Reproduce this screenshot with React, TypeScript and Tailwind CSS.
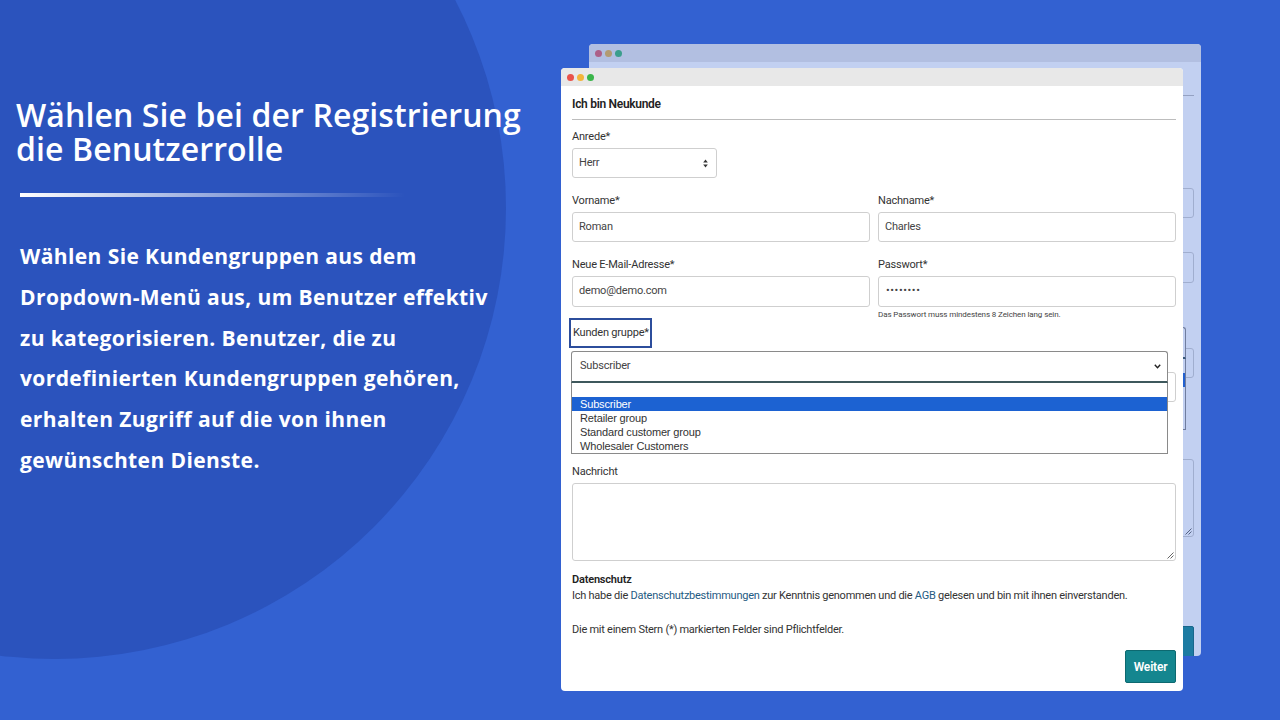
import React from "react";

const formFont = "font-['Roboto','Liberation_Sans',sans-serif]";

function Dots({ faded }: { faded?: boolean }) {
  return (
    <div className="flex h-[18px] items-center gap-[3px] pl-[6px]">
      <span className={`h-[7px] w-[7px] rounded-full ${faded ? "bg-[#e0606a]" : "bg-[#e9524a]"}`} />
      <span className={`h-[7px] w-[7px] rounded-full ${faded ? "bg-[#e8b44a]" : "bg-[#f2b53b]"}`} />
      <span className={`h-[7px] w-[7px] rounded-full ${faded ? "bg-[#3fb870]" : "bg-[#3ab54a]"}`} />
    </div>
  );
}

function Label({ children, ghost }: { children: React.ReactNode; ghost?: boolean }) {
  return (
    <div className="h-[14px] text-[11px] leading-[14px] tracking-[-0.2px] text-[#333]">{ghost ? null : children}</div>
  );
}

function Field({ children, className = "" }: { children?: React.ReactNode; className?: string }) {
  return (
    <div
      className={`flex h-[30px] items-center rounded-[3px] border border-[#cfcfcf] bg-white pl-[6px] text-[11px] tracking-[-0.2px] text-[#444] ${className}`}
    >
      {children}
    </div>
  );
}

function Form({ ghost }: { ghost?: boolean }) {
  const t = (s: React.ReactNode) => (ghost ? null : s);
  return (
    <div className={`flex flex-col pl-[11px] pr-[7px] ${formFont}`}>
      <div className="mt-[10px] h-[16px] text-[12px] font-semibold leading-[16px] tracking-[-0.3px] text-[#222]">
        {t("Ich bin Neukunde")}
      </div>
      <div className="mt-[7px] h-px bg-[#bdbdbd]" />

      <div className="mt-[10px]">
        <Label ghost={ghost}>Anrede*</Label>
      </div>
      <Field className="mt-[4px] w-[145px] justify-between pr-[8px]">
        <span>{t("Herr")}</span>
        {!ghost && (
          <svg width="5" height="9" viewBox="0 0 5 9">
            <path d="M2.5 0.5 L4.8 3.5 H0.2 Z" fill="#333" />
            <path d="M2.5 8.5 L4.8 5.5 H0.2 Z" fill="#333" />
          </svg>
        )}
      </Field>

      <div className="mt-[16px] grid grid-cols-2 gap-x-[8px]">
        <div className="flex flex-col">
          <Label ghost={ghost}>Vorname*</Label>
          <Field className="mt-[4px]">{t("Roman")}</Field>
        </div>
        <div className="flex flex-col">
          <Label ghost={ghost}>Nachname*</Label>
          <Field className="mt-[4px]">{t("Charles")}</Field>
        </div>
      </div>

      <div className="mt-[16px] grid grid-cols-2 gap-x-[8px]">
        <div className="flex flex-col">
          <Label ghost={ghost}>Neue E-Mail-Adresse*</Label>
          <Field className="mt-[4px] h-[31px]">{t("demo@demo.com")}</Field>
        </div>
        <div className="flex flex-col">
          <Label ghost={ghost}>Passwort*</Label>
          <Field className="mt-[4px] h-[31px] pl-[7px] text-[11px] tracking-[0.6px]">{t("••••••••")}</Field>
          <div className="mt-[3px] h-[10px] text-[8px] leading-[10px] tracking-[-0.1px] text-[#444]">
            {t("Das Passwort muss mindestens 8 Zeichen lang sein.")}
          </div>
        </div>
      </div>

      <div className="relative -mt-[2px] flex flex-col">
        <div
          className={`-ml-[3px] flex h-[30px] w-[83px] items-center border-2 pl-[2px] text-[11px] tracking-[-0.2px] text-[#333] ${
            ghost ? "border-transparent" : "border-[#2c4d9c]"
          }`}
        >
          {t("Kunden gruppe*")}
        </div>
        <Field className="mt-[24px]" />

        <div className="absolute left-[-1px] right-[8px] top-[33px] z-10 font-['Liberation_Sans',Arial,sans-serif]">
          <div className="flex h-[32px] items-center justify-between rounded-t-[3px] border border-b-2 border-[#8a8a8a] border-b-[#3e585c] bg-white pl-[8px] pr-[6px] font-['Roboto',sans-serif] text-[11px] tracking-[-0.2px] text-[#444]">
            <span>{t("Subscriber")}</span>
            {!ghost && (
              <svg width="7" height="5" viewBox="0 0 7 5">
                <path d="M0.8 0.8 L3.5 3.8 L6.2 0.8" fill="none" stroke="#222" strokeWidth="1.4" />
              </svg>
            )}
          </div>
          <div className="flex flex-col border-x border-b border-[#8a8a8a] bg-white text-[11px] leading-[14px] tracking-[-0.15px] text-[#333]">
            <div className="h-[14px]" />
            <div className="h-[14px] bg-[#1c62d2] pl-[8px] text-white">{t("Subscriber")}</div>
            <div className="h-[14px] pl-[8px]">{t("Retailer group")}</div>
            <div className="h-[14px] pl-[8px]">{t("Standard customer group")}</div>
            <div className="h-[14px] pl-[8px]">{t("Wholesaler Customers")}</div>
          </div>
        </div>
      </div>

      <div className="mt-[63px]">
        <Label ghost={ghost}>Nachricht</Label>
      </div>
      <div className="relative mt-[4px] h-[78px] rounded-[3px] border border-[#cfcfcf] bg-white">
        <svg className="absolute bottom-[1px] right-[1px]" width="8" height="8" viewBox="0 0 8 8">
          <path d="M7.5 1.5 L1.5 7.5 M7.5 4.5 L4.5 7.5" stroke="#666" strokeWidth="1" />
        </svg>
      </div>

      <div className="mt-[12px] h-[14px] text-[11px] font-semibold leading-[14px] tracking-[-0.2px] text-[#222]">
        {t("Datenschutz")}
      </div>
      <div className="mt-[2px] h-[14px] text-[11px] leading-[14px] tracking-[-0.25px] text-[#333]">
        {!ghost && (
          <>
            Ich habe die <span className="text-[#1f5b83]">Datenschutzbestimmungen</span> zur Kenntnis genommen und die{" "}
            <span className="text-[#1f5b83]">AGB</span> gelesen und bin mit ihnen einverstanden.
          </>
        )}
      </div>
      <div className="mt-[20px] h-[14px] text-[11px] leading-[14px] tracking-[-0.25px] text-[#333]">
        {t("Die mit einem Stern (*) markierten Felder sind Pflichtfelder.")}
      </div>
      <div className="mt-[13px] flex justify-end">
        <div className="flex h-[33px] w-[51px] items-center justify-center rounded-[2px] border border-[#0d6970] bg-[#14868f] text-[12px] font-semibold tracking-[-0.2px] text-white">
          {t("Weiter")}
        </div>
      </div>
    </div>
  );
}

function Window({ faded }: { faded?: boolean }) {
  return (
    <div className="h-full w-full overflow-hidden rounded-[4px] bg-white">
      <div className="h-[18px] bg-[#e8e8e8]">
        <Dots faded={faded} />
      </div>
      <Form ghost={faded} />
    </div>
  );
}

export default function App() {
  return (
    <div className="relative h-[720px] w-[1280px] overflow-hidden bg-[#3361d1]">
      <div className="pointer-events-none absolute left-[-396px] top-[-243px] h-[902px] w-[902px] rounded-full bg-[#2b53bd]" />

      <div className="relative flex">
        <div className="w-[561px] shrink-0 pl-[16px] pt-[98px] font-['Open_Sans',sans-serif] text-white">
          <h1 className="flex flex-col text-[32px] font-semibold tracking-[0.1px]">
            <span className="block h-[34px] leading-[34px]">Wählen Sie bei der Registrierung</span>
            <span className="block h-[34px] leading-[34px]">die Benutzerrolle</span>
          </h1>
          <div className="ml-[4px] mt-[27px] h-[4px] w-[385px] bg-gradient-to-r from-white via-white/50 to-transparent" />
          <p className="ml-[4px] mt-[39px] text-[21px] font-bold leading-[40.8px] tracking-[0.4px]">
            Wählen Sie Kundengruppen aus dem
            <br />
            Dropdown-Menü aus, um Benutzer effektiv
            <br />
            zu kategorisieren. Benutzer, die zu
            <br />
            vordefinierten Kundengruppen gehören,
            <br />
            erhalten Zugriff auf die von ihnen
            <br />
            gewünschten Dienste.
          </p>
        </div>

        <div className="relative mt-[68px] h-[623px] w-[622px] shrink-0">
          <div className="absolute left-[28px] top-[-24px] h-[612px] w-[612px] opacity-70">
            <Window faded />
          </div>
          <div className="relative h-full w-full">
            <Window />
          </div>
        </div>
      </div>
    </div>
  );
}
